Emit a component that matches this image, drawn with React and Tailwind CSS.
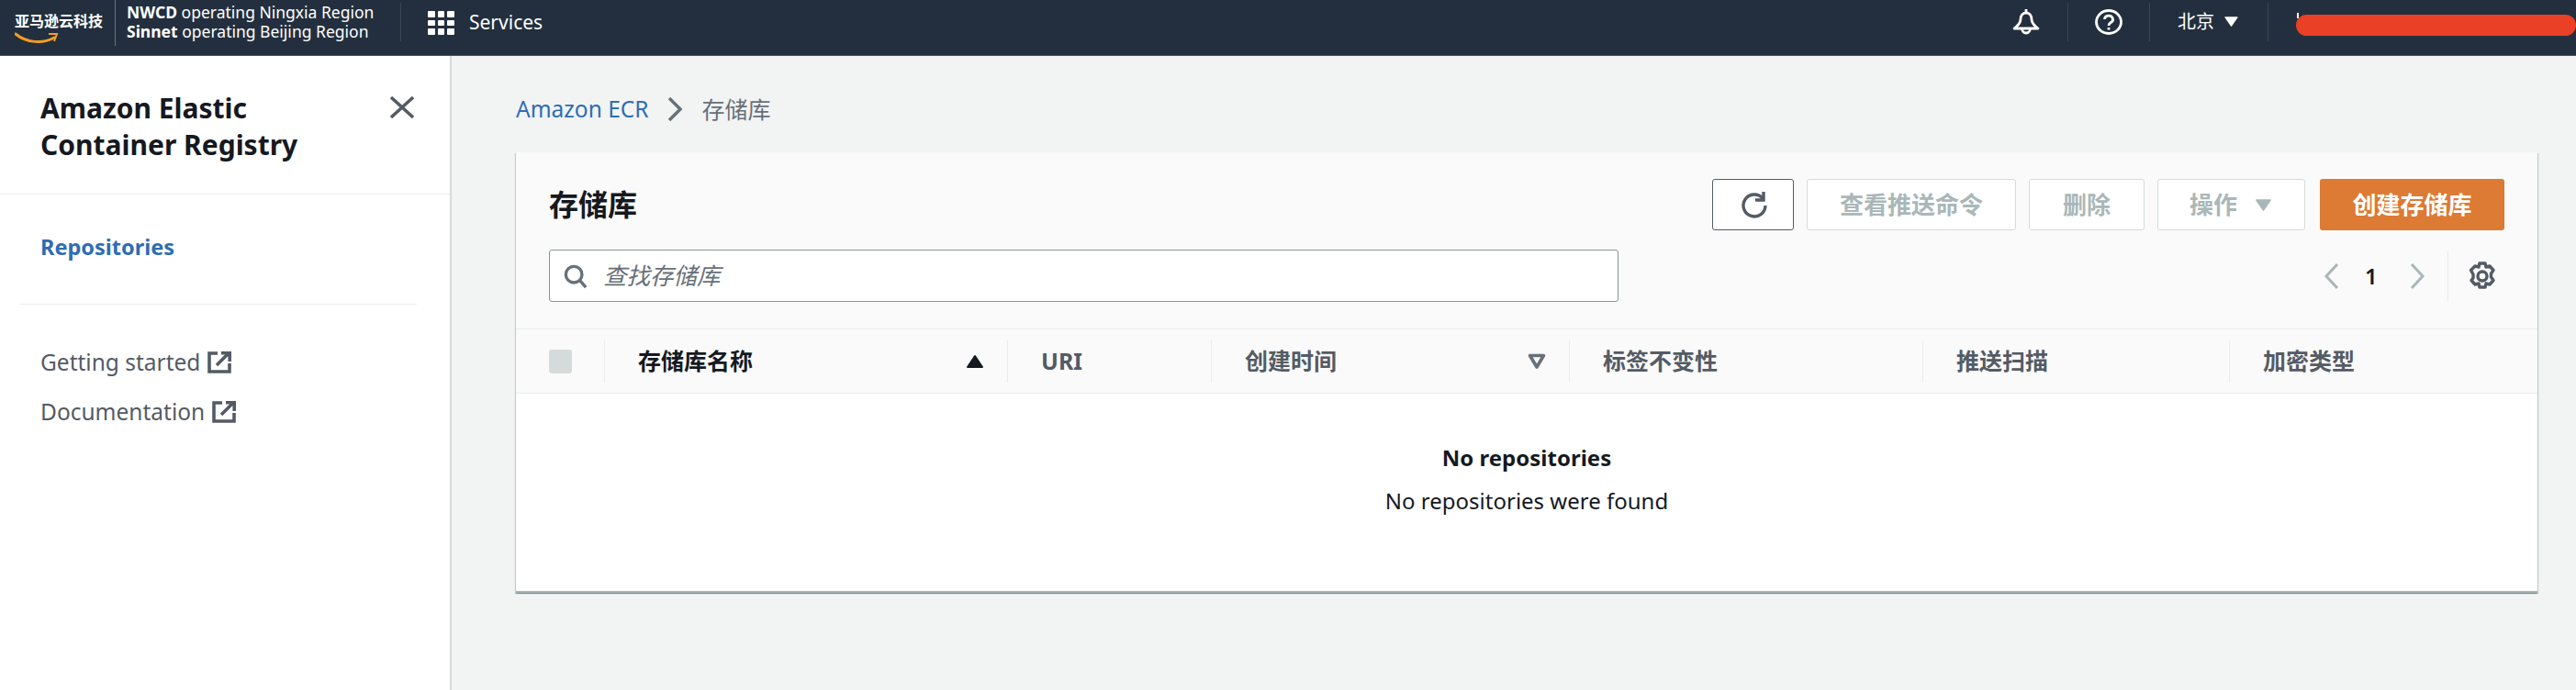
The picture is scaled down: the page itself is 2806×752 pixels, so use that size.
import React from "react";

const sans = "font-['Noto_Sans','Noto_Sans_CJK_SC',sans-serif]";

const Caret = ({ className }) => (
  <svg viewBox="0 0 16 12" className={className}>
    <path d="M1 1h14L8 11z" fill="currentColor" stroke="currentColor" strokeWidth="1.5" strokeLinejoin="round" />
  </svg>
);

const External = () => (
  <svg viewBox="0 0 26 24" className="h-6 w-[26px] text-[#545b64]" fill="none" stroke="currentColor" strokeWidth="3.6">
    <path d="M11 2H2v20h22v-9" />
    <path d="M10 15 23 2M15 1.800h9.200V11" />
  </svg>
);

const HeadCell = ({ width, children, dark, sort }) => (
  <div className="flex h-[46px] items-center border-l border-[#eaeded] pl-[36px] pr-[25px]" style={{ width }}>
    <span className={`flex-1 text-[25px] font-bold ${dark ? "text-[#16191f]" : "text-[#545b64]"}`}>{children}</span>
    {sort === "up" && (
      <svg viewBox="0 0 20 16" className="h-4 w-5 text-[#16191f]">
        <path d="M10 2 18 14H2z" fill="currentColor" stroke="currentColor" strokeWidth="2" strokeLinejoin="round" />
      </svg>
    )}
    {sort === "down" && (
      <svg viewBox="0 0 20 18" className="h-[18px] w-5 text-[#687078]" fill="none" stroke="currentColor" strokeWidth="3.600">
        <path d="M2.500 2.500h15L10 15z" strokeLinejoin="round" />
      </svg>
    )}
  </div>
);

const Divider = () => <div className="h-[42px] w-px bg-[#3b4654]" />;

const DisabledBtn = ({ children, className }) => (
  <button className={`flex h-14 items-center justify-center rounded-[3px] border border-[#d5dbdb] bg-white text-[26px] font-bold text-[#aab7b8] ${className}`}>
    {children}
  </button>
);

export default function App() {
  return (
    <div className={`flex h-[752px] w-[2806px] flex-col overflow-hidden bg-[#f2f3f3] ${sans}`}>
      {/* top nav */}
      <header className="flex h-[61px] shrink-0 items-start border-b border-[#4b5563] bg-[#232f3e] text-white">
        <div className="flex h-[50px] w-[125px] flex-col pl-4 pt-[11px]">
          <span className="text-[16px] font-bold leading-[24px] whitespace-nowrap">亚马逊云科技</span>
          <svg viewBox="0 0 50 14" className="h-3.5 w-[50px]" fill="none">
            <path d="M1 2c12 10 30 11 42 4" stroke="#f39c26" strokeWidth="3" strokeLinecap="round" />
            <path d="M37 2h9l-3 8" stroke="#f39c26" strokeWidth="2" />
          </svg>
        </div>
        <div className="h-[50px] w-px bg-[#6b7480]" />
        <div className="w-[310px] pl-3 pt-[2px] text-[17.500px] leading-[21px] whitespace-nowrap">
          <div className="pt-[1px]"><b>NWCD</b> operating Ningxia Region</div>
          <div><b>Sinnet</b> operating Beijing Region</div>
        </div>
        <div className="mt-[3px] h-[42px] w-px bg-[#3b4654]" />
        <div className="ml-[29px] mt-[12px] grid h-[26px] w-[29px] grid-cols-3 gap-[3px]">
          {[...Array(9)].map((_, i) => (
            <span key={i} className="rounded-[1px] bg-white" />
          ))}
        </div>
        <span className="ml-[16px] mt-[8px] text-[21px] leading-[32px]">Services</span>

        <div className="ml-auto flex items-start pt-[3px]">
          <svg viewBox="0 0 30 28" className="mr-[30px] mt-[7px] h-7 w-[30px]" fill="none" stroke="white" strokeWidth="2.8">
            <path d="M15 4c-4 0-6 3-6 7 0 4-3 7-7 10h26c-4-3-7-6-7-10 0-4-2-7-6-7Z" strokeLinejoin="round" />
            <path d="M15 0v4" />
            <path d="M10.500 21a4.500 5 0 0 0 9 0" />
          </svg>
          <Divider />
          <svg viewBox="0 0 30 28" className="mx-[29px] mt-[7px] h-7 w-[30px]" fill="none" stroke="white" strokeWidth="2.8">
            <ellipse cx="15" cy="14" rx="13.500" ry="12.500" />
            <path d="M10.500 11a4.500 4 0 1 1 6.500 3.700c-1.400.8-2 1.500-2 3.300" />
            <path d="M15 20v2.500" />
          </svg>
          <Divider />
          <span className="ml-[30px] text-[20px] leading-[42px]">北京</span>
          <Caret className="ml-[11px] mt-[15px] h-[11px] w-[15px]" />
          <div className="ml-[32px]"><Divider /></div>
          <div className="relative ml-[30px] mt-[13px] h-[23px] w-[305px]">
            <span className="absolute left-[1px] top-[-2px] h-[6px] w-[2px] bg-white" />
            <div className="absolute inset-0 rounded-full bg-[#ea4025]" />
          </div>
        </div>
      </header>

      <div className="flex min-h-0 flex-1">
        {/* side nav */}
        <aside className="w-[492px] shrink-0 border-r-2 border-[#d5dbdb] bg-white">
          <div className="flex h-[151px] items-start justify-between border-b border-[#eaeded] pl-11 pr-[39px] pt-[37px]">
            <h2 className="text-[30px] font-bold leading-[40px] text-[#16191f]">
              Amazon Elastic
              <br />
              Container Registry
            </h2>
            <svg viewBox="0 0 26 24" className="mt-[7px] h-6 w-[26px] text-[#545b64]" fill="none" stroke="currentColor" strokeWidth="3.400">
              <path d="M1 1l24 22M25 1 1 23" />
            </svg>
          </div>
          <div className="pl-11 pt-[39px] text-[23.500px] font-bold leading-[36px] text-[#2e6db4]">Repositories</div>
          <div className="ml-[22px] mr-[36px] mt-[44px] h-px bg-[#eaeded]" />
          <div className="pl-11 pt-[45px] text-[24.500px] leading-[36px] text-[#545b64]">
            <div className="flex items-center gap-2">Getting started <External /></div>
            <div className="mt-[18px] flex items-center gap-2">Documentation <External /></div>
          </div>
        </aside>

        {/* main content */}
        <main className="flex-1 pl-[70px] pr-[42px] pt-[40px]">
          <nav className="flex h-9 items-center leading-[36px]">
            <span className="text-[24.500px] text-[#2e6db4]">Amazon ECR</span>
            <svg viewBox="0 0 16 28" className="ml-[20px] mr-[22px] h-7 w-4 text-[#687078]" fill="none" stroke="currentColor" strokeWidth="3.400">
              <path d="M2 2l12 12L2 26" />
            </svg>
            <span className="text-[25px] text-[#687078]">存储库</span>
          </nav>

          <section className="mt-[29px] h-[480px] border-b-2 border-[#aab7b8] bg-white shadow-[0_1px_1px_0_rgba(0,28,36,0.3),1px_1px_1px_0_rgba(0,28,36,0.15),-1px_1px_1px_0_rgba(0,28,36,0.15)]">
            <div className="bg-[#fafafa]">
              <div className="flex items-center justify-between pl-9 pr-9 pt-[29px]">
                <h1 className="text-[32px] font-bold leading-[56px] text-[#16191f]">存储库</h1>
                <div className="flex items-center">
                  <button className="flex h-14 w-[89px] items-center justify-center rounded-[3px] border border-[#545b64] bg-white">
                    <svg viewBox="0 0 32 32" className="h-8 w-8 text-[#545b64]" fill="none" stroke="currentColor" strokeWidth="3.400">
                      <path d="M26 9a12 12 0 1 0 3 8" />
                      <path d="M27 2v9h-9" />
                    </svg>
                  </button>
                  <DisabledBtn className="ml-[14px] w-[228px]">查看推送命令</DisabledBtn>
                  <DisabledBtn className="ml-[14px] w-[126px]">删除</DisabledBtn>
                  <DisabledBtn className="ml-[14px] w-[161px] gap-[18px]">
                    操作 <Caret className="h-[13px] w-[21px]" />
                  </DisabledBtn>
                  <button className="ml-4 flex h-14 w-[201px] items-center justify-center rounded-[3px] bg-[#dd7a33] text-[26px] font-bold text-white">
                    创建存储库
                  </button>
                </div>
              </div>

              <div className="mt-[21px] flex h-[57px] items-center pl-9 pr-[45px]">
                <div className="flex h-[57px] w-[1165px] items-center rounded-[3px] border border-[#879596] bg-white pl-[15px]">
                  <svg viewBox="0 0 28 28" className="h-7 w-[26px] text-[#687078]" fill="none" stroke="currentColor" strokeWidth="3.600">
                    <circle cx="12" cy="12" r="9.500" />
                    <path d="M19 19l7 8" />
                  </svg>
                  <span className="ml-[17px] text-[25.500px] italic text-[#687078]">查找存储库</span>
                </div>
                <svg viewBox="0 0 16 30" className="ml-auto h-[30px] w-4 text-[#aab7b8]" fill="none" stroke="currentColor" strokeWidth="3">
                  <path d="M14 2 2 15l12 13" />
                </svg>
                <span className="ml-[28px] w-[9px] text-[24px] font-semibold text-[#16191f]">1</span>
                <svg viewBox="0 0 16 30" className="ml-[40px] h-[30px] w-4 text-[#aab7b8]" fill="none" stroke="currentColor" strokeWidth="3">
                  <path d="M2 2l12 13L2 28" />
                </svg>
                <div className="ml-[25px] h-[56px] w-px bg-[#eaeded]" />
                <svg viewBox="0 0 30 32" className="ml-[22px] h-8 w-[30px] text-[#545b64]" fill="none" stroke="currentColor" strokeWidth="3.400" strokeLinejoin="round">
                  <path d="M12 2h6l1 4 4-1 4 4.500-2.500 3.500 0 4 2.500 3.500-4 4.500-4-1-1 4h-6l-1-4-4 1-4-4.500L5 18v-4L2.500 9.500 7 5l4 1z" />
                  <circle cx="15" cy="16" r="5" />
                </svg>
              </div>

              <div className="mt-[29px] flex h-[71px] items-center border-y border-[#eaeded]">
                <div className="flex w-[96px] items-center pl-9">
                  <span className="h-[26px] w-[25px] rounded-[3px] bg-[#d5dbdb]" />
                </div>
                <HeadCell width={439} dark sort="up">
                  存储库名称
                </HeadCell>
                <HeadCell width={222}>URI</HeadCell>
                <HeadCell width={390} sort="down">创建时间</HeadCell>
                <HeadCell width={385}>标签不变性</HeadCell>
                <HeadCell width={334}>推送扫描</HeadCell>
                <HeadCell width={336}>加密类型</HeadCell>
              </div>
            </div>

            <div className="pt-[53px] text-center text-[24px] leading-[34px] text-[#16191f]">
              <div className="font-bold">No repositories</div>
              <div className="mt-[13px]">No repositories were found</div>
            </div>
          </section>
        </main>
      </div>
    </div>
  );
}
